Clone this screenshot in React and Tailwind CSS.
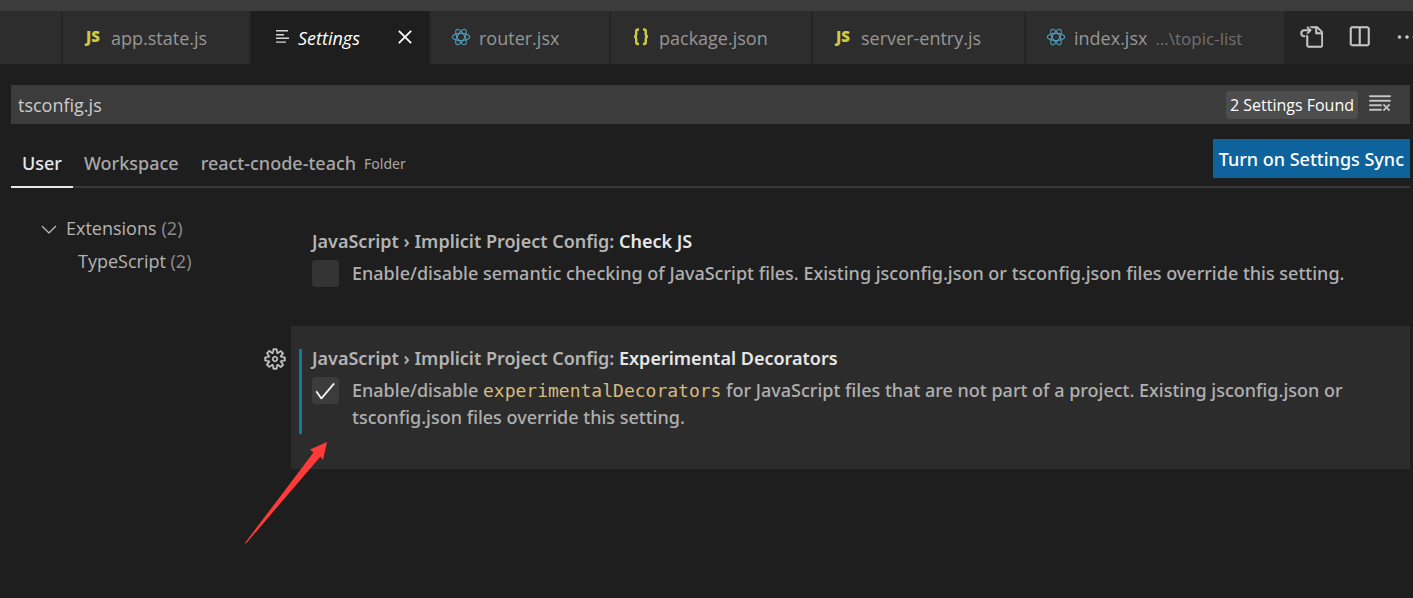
import { useState } from 'react';
import {
  VscCheck,
  VscChevronDown,
  VscClearAll,
  VscClose,
  VscEllipsis,
  VscGear,
  VscGoToFile,
  VscSplitHorizontal,
} from 'react-icons/vsc';

const TABS = [
  { id: 'state', label: 'app.state.js', icon: 'js', width: 'w-[188px]' },
  { id: 'settings', label: 'Settings', icon: 'lines', width: 'w-[180px]' },
  { id: 'router', label: 'router.jsx', icon: 'react', width: 'w-[180px]' },
  { id: 'package', label: 'package.json', icon: 'json', width: 'w-[202px]' },
  { id: 'server', label: 'server-entry.js', icon: 'js', width: 'w-[213px]' },
  { id: 'index', label: 'index.jsx', path: '...\\topic-list', icon: 'react', width: 'flex-1' },
];

const SCOPES = [
  { id: 'user', label: 'User' },
  { id: 'workspace', label: 'Workspace' },
  { id: 'folder', label: 'react-cnode-teach', hint: 'Folder' },
];

const SETTINGS = [
  {
    id: 'checkJs',
    name: 'Check JS',
    description:
      'Enable/disable semantic checking of JavaScript files. Existing jsconfig.json or tsconfig.json files override this setting.',
  },
  {
    id: 'experimentalDecorators',
    name: 'Experimental Decorators',
    focused: true,
    description: (
      <>
        Enable/disable{' '}
        <code className="font-['DejaVu_Sans_Mono',monospace] text-[18px] text-[#d7ba7d]">experimentalDecorators</code>{' '}
        for JavaScript files that are not part of a project. Existing jsconfig.json or tsconfig.json files override
        this setting.
      </>
    ),
  },
];

function FileIcon({ type }) {
  if (type === 'js') {
    return <span className="w-4 text-[15px] font-extrabold text-[#cbcb41]">JS</span>;
  }
  if (type === 'json') {
    return (
      <svg viewBox="0 0 16 18" className="w-4 h-[18px]" fill="none" stroke="#cbcb41" strokeWidth="2.4">
        <path d="M6 1.5H5Q3.2 1.5 3.2 3.5V6.2Q3.2 8.6 1 8.6Q3.2 8.6 3.2 11V14Q3.2 16 5 16H6" />
        <path d="M10 1.5H11Q12.8 1.5 12.8 3.5V6.2Q12.8 8.6 15 8.6Q12.8 8.6 12.8 11V14Q12.8 16 11 16H10" />
      </svg>
    );
  }
  if (type === 'react') {
    return (
      <svg viewBox="0 0 20 18" className="w-5 h-[18px]" fill="none" stroke="#519aba" strokeWidth="1.1">
        <ellipse cx="10" cy="9" rx="8.7" ry="3.6" />
        <ellipse cx="10" cy="9" rx="8.7" ry="3.6" transform="rotate(60 10 9)" />
        <ellipse cx="10" cy="9" rx="8.7" ry="3.6" transform="rotate(120 10 9)" />
      </svg>
    );
  }
  return (
    <svg viewBox="0 0 13 13" className="w-[13px] h-[13px]" fill="#d4d7d6">
      <path d="M0 0H12V1.4H0zM0 4H8V5.4H0zM0 7.6H13V9H0zM0 11.4H10V12.8H0z" />
    </svg>
  );
}

function EditorTab({ tab, active, onSelect }) {
  return (
    <div
      className={`flex items-center shrink-0 min-w-0 border-r-2 border-[#252526] ${tab.width} ${
        active ? 'bg-[#1e1e1e]' : 'bg-[#2d2d2d]'
      }`}
    >
      <button
        onClick={onSelect}
        className={`flex items-center h-full flex-1 pt-[2px] whitespace-nowrap ${active ? 'pl-[25px]' : 'pl-5'} ${
          active ? 'text-white italic font-medium' : 'text-[#969696]'
        }`}
      >
        <span className={`flex items-center pb-1 ${active ? 'w-[22px]' : 'w-7 justify-center pr-2'}`}>
          <FileIcon type={tab.icon} />
        </span>
        {tab.label}
        {tab.path && <span className="ml-2 text-[17px] text-[#717171]">{tab.path}</span>}
      </button>
      {active && (
        <button aria-label="Close" className="mr-3 pb-[2px] text-white">
          <VscClose size={24} strokeWidth="0.3" />
        </button>
      )}
    </div>
  );
}

function SettingItem({ setting, checked, onToggle }) {
  return (
    <div className="flex">
      <div className="w-[28px] shrink-0 pt-[21px] text-[#c5c5c5]">
        {setting.focused && (
          <button aria-label="More actions" className="block">
            <VscGear size={24} strokeWidth="0.2" />
          </button>
        )}
      </div>
      <div className={`flex-1 min-w-0 pl-2 pt-[23px] pb-[35px] ${setting.focused ? 'bg-[#2c2c2c]' : ''}`}>
        <div className={`border-l-3 pl-[10px] pb-[3px] ${setting.focused ? 'border-[#0c7d9d]' : 'border-transparent'}`}>
          <h2 className="font-['Noto_Sans',sans-serif] leading-[18px] font-semibold text-[#b4b4b4]">
            JavaScript › Implicit Project Config: <span className="text-[#e7e7e7]">{setting.name}</span>
          </h2>
          <div className="flex mt-[10px]">
            <span className="relative w-[27px] h-[27px] shrink-0">
              <input
                id={setting.id}
                type="checkbox"
                checked={checked}
                onChange={onToggle}
                className={`block appearance-none w-full h-full rounded-[4px] ${
                  setting.focused ? 'bg-[#3c3c3c]' : 'bg-[#343434]'
                }`}
              />
              {checked && (
                <VscCheck
                  size={24}
                  strokeWidth="0.2"
                  className="absolute left-[1px] top-[2px] text-white pointer-events-none"
                />
              )}
            </span>
            <label
              htmlFor={setting.id}
              className="ml-[13px] pr-12 font-['Noto_Sans',sans-serif] font-medium leading-[27px] text-[#b0b0b0]"
            >
              {setting.description}
            </label>
          </div>
        </div>
      </div>
    </div>
  );
}

export default function App() {
  const [activeTab, setActiveTab] = useState('settings');
  const [scope, setScope] = useState('user');
  const [query, setQuery] = useState('tsconfig.js');
  const [values, setValues] = useState({ checkJs: false, experimentalDecorators: true });

  return (
    <div className="relative min-h-screen overflow-hidden bg-[#1e1e1e] font-['Open_Sans','Noto_Sans',sans-serif] text-[18px] text-[#cccccc]">
      <div className="h-[11px] bg-[#3c3c3c]" />

      {/* Editor tabs and the editor actions */}
      <div className="flex h-[53px] bg-[#252526]">
        <div className="w-[63px] shrink-0 border-r-2 border-[#252526] bg-[#2d2d2d]" />
        <div className="flex flex-1 min-w-0 overflow-hidden">
          {TABS.map((tab) => (
            <EditorTab key={tab.id} tab={tab} active={tab.id === activeTab} onSelect={() => setActiveTab(tab.id)} />
          ))}
        </div>
        <div className="flex items-center gap-6 w-[127px] shrink-0 pl-[13px] pb-[2px] overflow-hidden text-[#c5c5c5]">
          <button aria-label="Open settings file" className="shrink-0">
            <VscGoToFile size={24} strokeWidth="0.4" />
          </button>
          <button aria-label="Split editor" className="shrink-0">
            <VscSplitHorizontal size={24} strokeWidth="0.4" />
          </button>
          <button aria-label="More actions" className="shrink-0">
            <VscEllipsis size={24} strokeWidth="0.4" />
          </button>
        </div>
      </div>

      <div className="pl-[11px] pr-[3px] pt-[21px]">
        <div className="flex items-center h-[39px] bg-[#3c3c3c]">
          <input
            type="text"
            aria-label="Search settings"
            value={query}
            onChange={(e) => setQuery(e.target.value)}
            className="flex-1 min-w-0 h-full pl-[7px] outline-none bg-transparent"
          />
          <span className="rounded-[4px] bg-[#4d4d4d] px-1 pt-px text-[16px] leading-[27px] text-white">
            2 Settings Found
          </span>
          <button aria-label="Clear search" className="ml-[10px] mr-[18px] pb-1 text-[#c5c5c5]">
            <VscClearAll size={24} strokeWidth="0.3" />
          </button>
        </div>

        {/* Scope switcher */}
        <div className="flex justify-between h-[64px] border-b-2 border-[#3a3a3a] font-['Noto_Sans',sans-serif] font-medium">
          <div className="flex pt-4 -mb-[2px]">
            {SCOPES.map((s) => (
              <button
                key={s.id}
                onClick={() => setScope(s.id)}
                className={`flex items-center px-[11px] border-b-2 ${
                  s.id === scope ? 'border-[#e7e7e7] text-[#e7e7e7]' : 'border-transparent text-[#a8a8a8]'
                }`}
              >
                {s.label}
                {s.hint && <span className="ml-2 text-[14px] font-normal">{s.hint}</span>}
              </button>
            ))}
          </div>
          <button className="self-start mt-[15px] h-[39px] px-[6px] pt-px bg-[#0e639c] text-white">
            Turn on Settings Sync
          </button>
        </div>

        <div className="flex pt-[21px]">
          <nav className="w-[252px] shrink-0 pt-[3px] leading-[33px] text-[#b4b4b4]">
            <button className="flex items-center pl-[26px]">
              <VscChevronDown size={24} className="mr-[5px]" />
              Extensions <span className="ml-[5px] text-[#8e8e8e]">(2)</span>
            </button>
            <button className="block pl-[67px]">
              TypeScript <span className="text-[#8e8e8e]">(2)</span>
            </button>
          </nav>
          <main className="flex flex-col gap-px flex-1 min-w-0">
            {SETTINGS.map((setting) => (
              <SettingItem
                key={setting.id}
                setting={setting}
                checked={values[setting.id]}
                onToggle={() => setValues((v) => ({ ...v, [setting.id]: !v[setting.id] }))}
              />
            ))}
          </main>
        </div>
      </div>

      {/* Annotation arrow pointing at the ticked setting */}
      <svg
        viewBox="0 0 84 103"
        className="absolute left-[244px] top-[441px] w-[84px] h-[103px] pointer-events-none"
        fill="#ff3b3a"
      >
        <path d="M83 1L66 8.5L69.5 11.5L1 102L2 102.5L76.5 15.5L79 19Z" />
      </svg>
    </div>
  );
}
